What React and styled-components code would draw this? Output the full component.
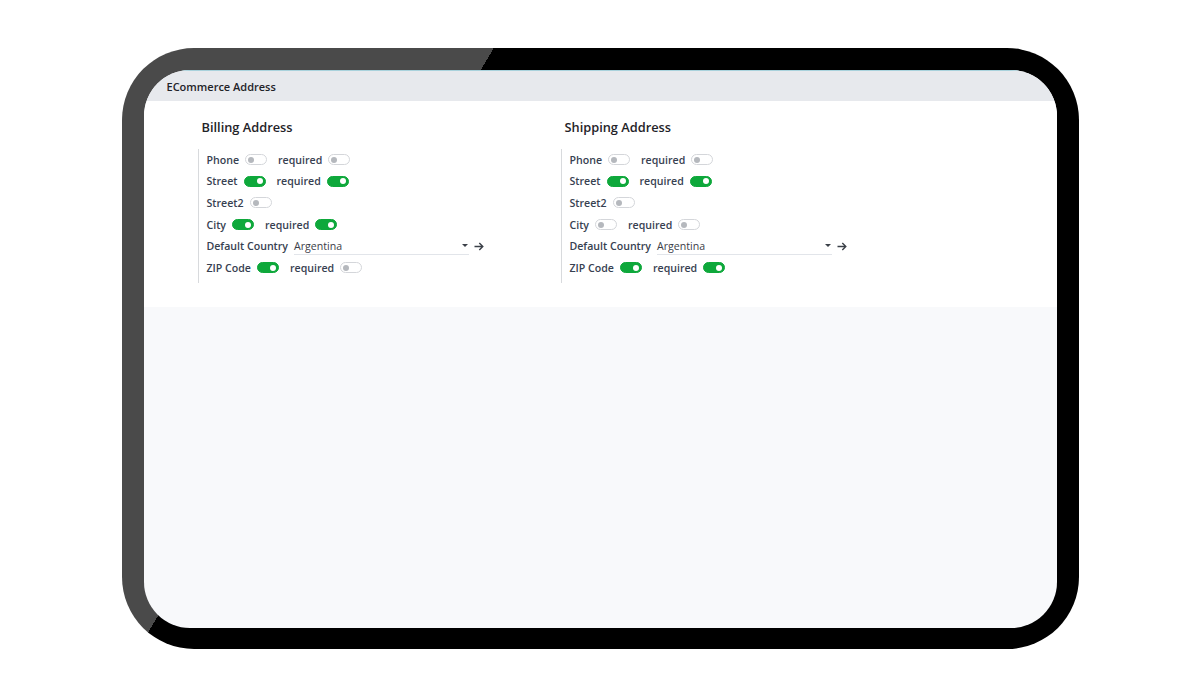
import React from 'react';
import styled, { createGlobalStyle } from 'styled-components';

const GlobalStyle = createGlobalStyle`
  html, body {
    margin: 0;
    padding: 0;
    background: #fff;
  }
  body {
    font-family: "Open Sans", "Noto Sans", sans-serif;
  }
`;

const Stage = styled.div`
  width: 1200px;
  height: 697px;
  display: flex;
  align-items: center;
  justify-content: center;
`;

const Device = styled.div`
  width: 957px;
  height: 601px;
  box-sizing: border-box;
  padding: 22px 22px 21px 22px;
  border-radius: 72px;
  background: linear-gradient(120.6deg, #4a4a4a 320px, #000 320px);
  display: flex;
`;

const Screen = styled.div`
  flex: 1;
  border-radius: 46px;
  overflow: hidden;
  background: #f8f9fb;
  display: flex;
  flex-direction: column;
`;

const Header = styled.div`
  height: 31px;
  flex: none;
  display: flex;
  align-items: center;
  padding-left: 23px;
  background: #e7e9ed;
  border-top: 1px solid #a9d2dc;
  box-sizing: border-box;
  font-size: 11px;
  font-weight: 600;
  color: #1f2328;
`;

const Content = styled.div`
  background: #fff;
  display: grid;
  grid-template-columns: 363px 363px;
  padding: 17px 0 24px 54px;
`;

const Group = styled.div`
  display: flex;
  flex-direction: column;
`;

const Title = styled.div`
  margin-left: 4px;
  font-size: 12.8px;
  font-weight: 600;
  line-height: 18px;
  color: #1f2328;
  margin-bottom: 13px;
`;

const Fields = styled.div`
  border-left: 1px solid #d8dadd;
  padding: 0 0 4px 8px;
`;

const Row = styled.div`
  height: 21.6px;
  display: flex;
  align-items: center;
  font-size: 10.6px;
  font-weight: 600;
  color: #374151;
`;

const Label = styled.span`
  margin-right: 6px;
  margin-left: ${p => (p.$sub ? '11px' : '0')};
  white-space: nowrap;
`;

const Toggle = styled.span`
  position: relative;
  width: 22px;
  height: 11px;
  box-sizing: border-box;
  border-radius: 6px;
  border: 1px solid ${p => (p.$on ? '#0ea83b' : '#d4d6da')};
  background: ${p => (p.$on ? '#0ea83b' : '#fff')};
  flex: none;

  &::after {
    content: '';
    position: absolute;
    top: 1.5px;
    left: ${p => (p.$on ? '12px' : '2px')};
    width: 6px;
    height: 6px;
    border-radius: 50%;
    background: ${p => (p.$on ? '#fff' : '#b5b8bd')};
  }
`;

const Select = styled.div`
  width: 175px;
  height: 17px;
  box-sizing: border-box;
  display: flex;
  align-items: center;
  justify-content: space-between;
  border-bottom: 1px solid #e2e5ea;
  font-weight: 400;
  color: #3b4048;
`;

const Caret = styled.span`
  width: 0;
  height: 0;
  margin-right: 1px;
  border-left: 3px solid transparent;
  border-right: 3px solid transparent;
  border-top: 3px solid #3b4048;
`;

const LinkBtn = styled.span`
  display: flex;
  align-items: center;
  margin-left: 5px;
  color: #3b4048;
`;

const Arrow = () => (
  <svg width="10" height="9" viewBox="0 0 10 9" fill="none" stroke="currentColor" strokeWidth="1.4">
    <path d="M0.5 4.5H8.8M5.3 1L8.8 4.5L5.3 8" />
  </svg>
);

const groups = [
  {
    title: 'Billing Address',
    phone: [false, false],
    street: [true, true],
    street2: false,
    city: [true, true],
    zip: [true, false],
  },
  {
    title: 'Shipping Address',
    phone: [false, false],
    street: [true, true],
    street2: false,
    city: [false, false],
    zip: [true, true],
  },
];

const PairRow = ({ label, value }) => (
  <Row>
    <Label>{label}</Label>
    <Toggle $on={value[0]} />
    <Label $sub>required</Label>
    <Toggle $on={value[1]} />
  </Row>
);

const AddressGroup = ({ g }) => (
  <Group>
    <Title>{g.title}</Title>
    <Fields>
      <PairRow label="Phone" value={g.phone} />
      <PairRow label="Street" value={g.street} />
      <Row>
        <Label>Street2</Label>
        <Toggle $on={g.street2} />
      </Row>
      <PairRow label="City" value={g.city} />
      <Row>
        <Label>Default Country</Label>
        <Select>
          <span>Argentina</span>
          <Caret />
        </Select>
        <LinkBtn>
          <Arrow />
        </LinkBtn>
      </Row>
      <PairRow label="ZIP Code" value={g.zip} />
    </Fields>
  </Group>
);

export default function App() {
  return (
    <>
      <GlobalStyle />
      <Stage>
        <Device>
          <Screen>
            <Header>ECommerce Address</Header>
            <Content>
              {groups.map(g => (
                <AddressGroup key={g.title} g={g} />
              ))}
            </Content>
          </Screen>
        </Device>
      </Stage>
    </>
  );
}
